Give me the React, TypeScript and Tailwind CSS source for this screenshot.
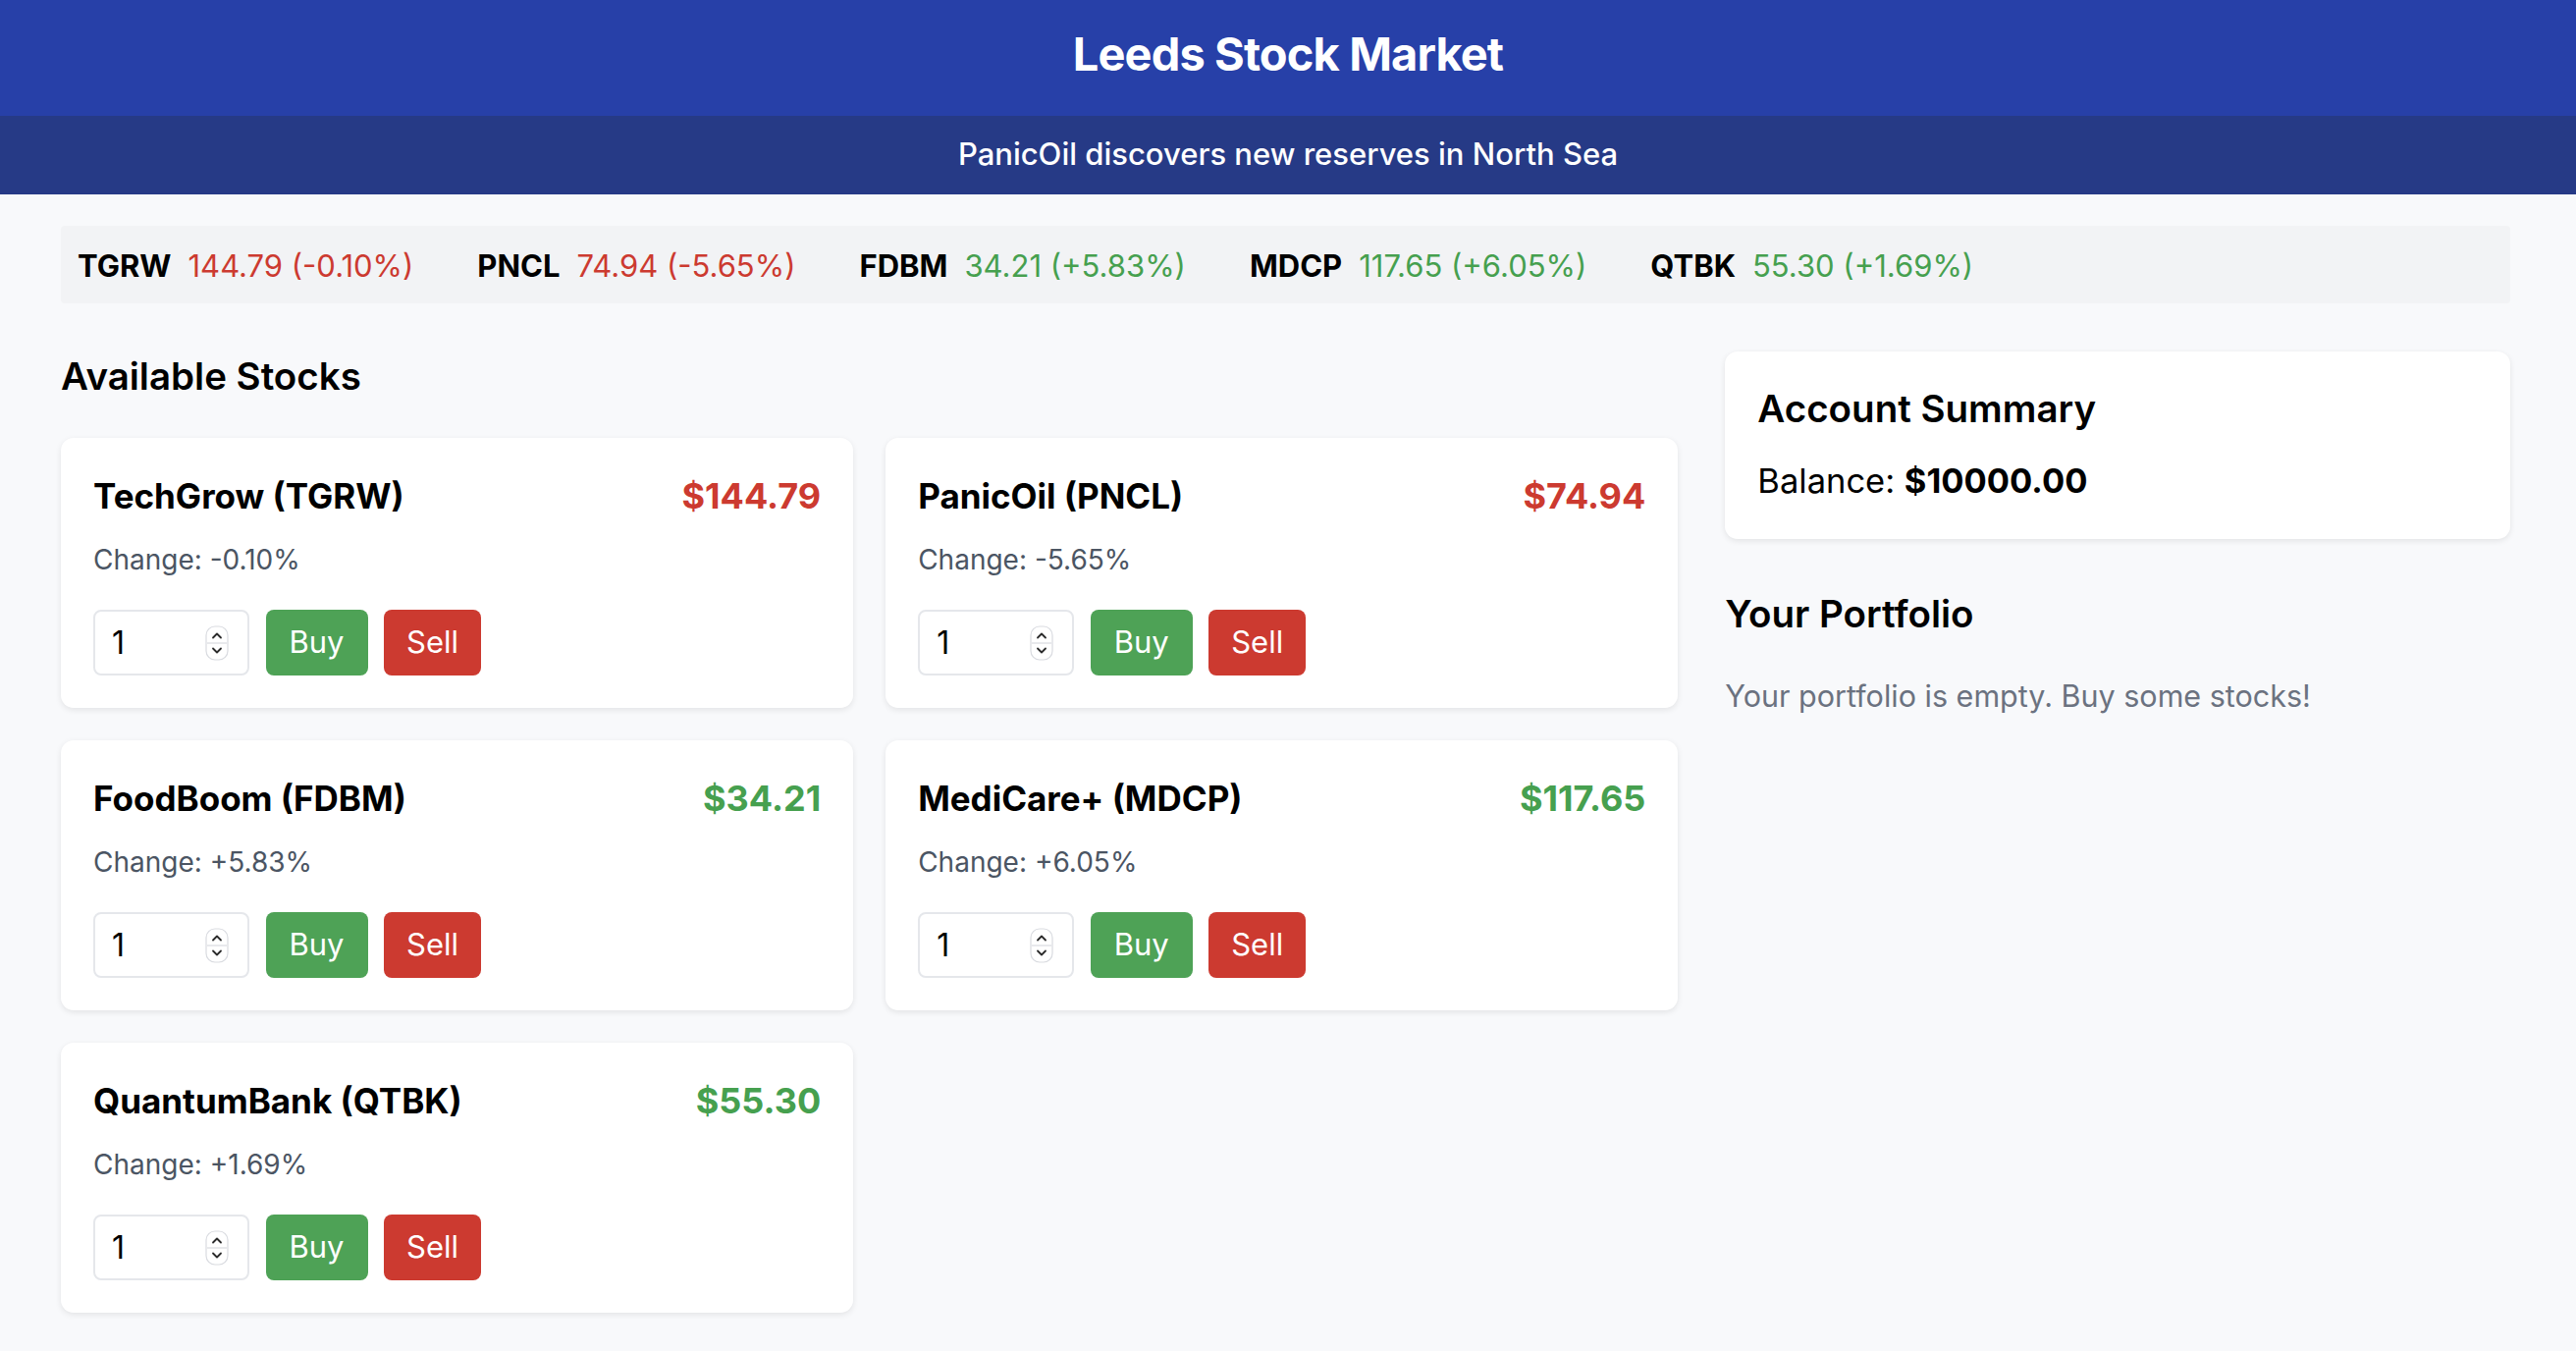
import React from "react";

type Stock = { name: string; sym: string; price: string; change: string; up: boolean };

const stocks: Stock[] = [
  { name: "TechGrow", sym: "TGRW", price: "144.79", change: "-0.10", up: false },
  { name: "PanicOil", sym: "PNCL", price: "74.94", change: "-5.65", up: false },
  { name: "FoodBoom", sym: "FDBM", price: "34.21", change: "+5.83", up: true },
  { name: "MediCare+", sym: "MDCP", price: "117.65", change: "+6.05", up: true },
  { name: "QuantumBank", sym: "QTBK", price: "55.30", change: "+1.69", up: true },
];

function Spinner() {
  return (
    <svg width="24" height="36" viewBox="0 0 24 36" className="shrink-0">
      <rect x="1" y="1" width="22" height="34" rx="9" fill="#ffffff" stroke="#d9dbe0" strokeWidth="1.2" />
      <line x1="2" y1="18" x2="22" y2="18" stroke="#d9dbe0" strokeWidth="1.2" />
      <path d="M8 12.5 L12 8.5 L16 12.5" fill="none" stroke="#2b2b2b" strokeWidth="1.8" strokeLinecap="round" strokeLinejoin="round" />
      <path d="M8 23.5 L12 27.5 L16 23.5" fill="none" stroke="#2b2b2b" strokeWidth="1.8" strokeLinecap="round" strokeLinejoin="round" />
    </svg>
  );
}

function StockCard({ s }: { s: Stock }) {
  return (
    <div className="bg-white rounded-[13px] shadow-[0_2px_6px_rgba(0,0,0,0.09)] p-[33px]">
      <div className="flex items-center justify-between leading-[53px]">
        <h3 className="text-[35px] font-bold text-black">
          {s.name} ({s.sym})
        </h3>
        <span className={s.up ? "text-[36px] font-bold text-[#46a04f]" : "text-[36px] font-bold text-[#cc3a30]"}>
          ${s.price}
        </span>
      </div>
      <p className="mt-[16px] text-[28px] leading-[44px] text-[#4b5563]">Change: {s.change}%</p>
      <div className="mt-[29px] flex gap-[16.5px]">
        <div className="w-[159px] h-[67px] border-2 border-[#e5e7eb] rounded-[8px] bg-white flex items-center justify-between pl-[17px] pr-[19px] text-[32px] text-black">
          <span>1</span>
          <Spinner />
        </div>
        <button className="h-[67px] px-[24px] rounded-[8px] bg-[#4ea256] text-white text-[31px]">Buy</button>
        <button className="h-[67px] px-[23px] rounded-[8px] bg-[#cc3a30] text-white text-[31px]">Sell</button>
      </div>
    </div>
  );
}

export default function App() {
  return (
    <div className="min-h-screen bg-[#f8f9fb] font-[family-name:Inter,sans-serif] text-black">
      <header className="bg-[#2740a8] pt-[26px] pb-[34px] text-center">
        <h1 className="text-[47px] leading-[58px] font-bold tracking-[-0.019em] text-white">Leeds Stock Market</h1>
      </header>
      <div className="bg-[#263a86] pt-[19px] pb-[21px] text-center">
        <p className="text-[31px] leading-[40px] font-medium text-white">PanicOil discovers new reserves in North Sea</p>
      </div>
      <main className="pl-[62px] pr-[67px] pb-[40px]">
        <div className="mt-[32px] bg-[#f2f3f5] rounded-[4px] pl-[17px] pt-[19px] pb-[16px] flex gap-[65px] text-[31px] leading-[44px]">
          {stocks.map((s) => (
            <div key={s.sym} className="flex gap-[17px]">
              <span className="font-bold text-black">{s.sym}</span>
              <span className={s.up ? "text-[#46a04f]" : "text-[#cc3a30]"}>
                {s.price} ({s.change}%)
              </span>
            </div>
          ))}
        </div>
        <div className="mt-[49px] grid grid-cols-3 gap-x-[48px]">
          <section className="col-span-2">
            <h2 className="text-[38.5px] leading-[51px] font-semibold">Available Stocks</h2>
            <div className="mt-[37px] grid grid-cols-2 gap-[33px]">
              {stocks.map((s) => (
                <StockCard key={s.sym} s={s} />
              ))}
            </div>
          </section>
          <aside>
            <div className="bg-white rounded-[13px] shadow-[0_2px_6px_rgba(0,0,0,0.09)] p-[33px]">
              <h2 className="text-[38.5px] leading-[51px] font-semibold">Account Summary</h2>
              <p className="mt-[22px] text-[34.5px] leading-[52px]">
                Balance: <span className="font-bold">$10000.00</span>
              </p>
            </div>
            <h2 className="mt-[51px] text-[38.5px] leading-[51px] font-semibold">Your Portfolio</h2>
            <p className="mt-[36px] text-[30.5px] leading-[44px] text-[#6b7280]">Your portfolio is empty. Buy some stocks!</p>
          </aside>
        </div>
      </main>
    </div>
  );
}
